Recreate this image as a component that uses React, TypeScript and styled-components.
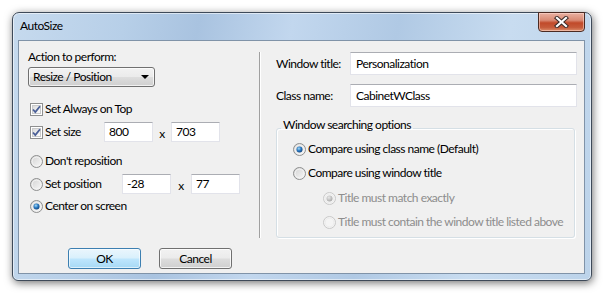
import React from "react";
import styled, { createGlobalStyle } from "styled-components";

const GlobalStyle = createGlobalStyle`
  html, body {
    margin: 0;
    padding: 0;
    background: #ffffff;
  }
  body {
    font-family: Lato, "Noto Sans", sans-serif;
    font-size: 12px;
    letter-spacing: -0.5px;
  }
`;

const CheckBox = ({ checked }: { checked?: boolean }) => (
  <svg width="13" height="13" viewBox="0 0 13 13">
    <defs>
      <linearGradient id="cbfill" x1="0" y1="0" x2="1" y2="1">
        <stop offset="0" stopColor="#d8d8d8" />
        <stop offset="1" stopColor="#ffffff" />
      </linearGradient>
    </defs>
    <rect x="0.5" y="0.5" width="12" height="12" fill="#fff" stroke="#8e8f8f" />
    <rect x="2.5" y="2.5" width="8" height="8" fill="url(#cbfill)" stroke="#c9cacb" />
    {checked && (
      <path d="M3 6.5 L5.3 9 L10 3.2" fill="none" stroke="#4a5f97" strokeWidth="1.8" />
    )}
  </svg>
);

const Radio = ({ checked, disabled }: { checked?: boolean; disabled?: boolean }) => (
  <svg width="13" height="13" viewBox="0 0 13 13">
    <defs>
      <radialGradient id="rdot" cx="0.4" cy="0.35" r="0.7">
        <stop offset="0" stopColor="#a9dcf6" />
        <stop offset="0.5" stopColor="#2b7bc4" />
        <stop offset="1" stopColor="#0d3f78" />
      </radialGradient>
      <radialGradient id="rdotoff" cx="0.4" cy="0.35" r="0.7">
        <stop offset="0" stopColor="#e8e8e8" />
        <stop offset="1" stopColor="#a6a6a6" />
      </radialGradient>
      <linearGradient id="rfill" x1="0" y1="0" x2="1" y2="1">
        <stop offset="0" stopColor="#d0d0d0" />
        <stop offset="1" stopColor="#fbfbfb" />
      </linearGradient>
    </defs>
    <circle cx="6.5" cy="6.5" r="6" fill={disabled ? "#f4f4f4" : "url(#rfill)"} stroke={disabled ? "#c8c8c8" : "#8e8f8f"} />
    <circle cx="6.5" cy="6.5" r="4.4" fill="none" stroke={disabled ? "#ececec" : "#f4f4f4"} />
    {checked && <circle cx="6.5" cy="6.5" r="3" fill={disabled ? "url(#rdotoff)" : "url(#rdot)"} />}
  </svg>
);

const App = () => {
  return (
    <>
      <GlobalStyle />
      <Page>
        <Window>
          <TitleBar>
            <Title>AutoSize</Title>
            <CloseButton>
              <svg width="15" height="12" viewBox="0 0 15 12">
                <path d="M3 2 L12 10 M12 2 L3 10" stroke="#3a2b28" strokeWidth="4.2" strokeLinecap="square" />
                <path d="M3 2 L12 10 M12 2 L3 10" stroke="#ffffff" strokeWidth="2.2" strokeLinecap="square" />
              </svg>
            </CloseButton>
          </TitleBar>
          <Client>
            <Main>
              <LeftCol>
                <Label>Action to perform:</Label>
                <Dropdown>
                  <span>Resize / Position</span>
                  <Arrow />
                </Dropdown>
                <OptionRow $top={12}>
                  <CheckBox checked />
                  <OptionText>Set Always on Top</OptionText>
                </OptionRow>
                <OptionRow $top={3}>
                  <CheckBox checked />
                  <OptionText $width={59}>Set size</OptionText>
                  <NumberBox>800</NumberBox>
                  <Times>x</Times>
                  <NumberBox>703</NumberBox>
                </OptionRow>
                <OptionRow $top={9}>
                  <Radio />
                  <OptionText>Don't reposition</OptionText>
                </OptionRow>
                <OptionRow $top={3}>
                  <Radio />
                  <OptionText $width={77}>Set position</OptionText>
                  <NumberBox>-28</NumberBox>
                  <Times $gap={20}>x</Times>
                  <NumberBox>77</NumberBox>
                </OptionRow>
                <OptionRow $top={2}>
                  <Radio checked />
                  <OptionText>Center on screen</OptionText>
                </OptionRow>
              </LeftCol>
              <Separator />
              <RightCol>
                <FieldRow>
                  <FieldLabel>Window title:</FieldLabel>
                  <TextBox>Personalization</TextBox>
                </FieldRow>
                <FieldRow $top={9}>
                  <FieldLabel>Class name:</FieldLabel>
                  <TextBox>CabinetWClass</TextBox>
                </FieldRow>
                <GroupBox>
                  <Legend>Window searching options</Legend>
                  <GroupRow $top={1}>
                    <Radio checked />
                    <OptionText>Compare using class name (Default)</OptionText>
                  </GroupRow>
                  <GroupRow $top={4}>
                    <Radio />
                    <OptionText>Compare using window title</OptionText>
                  </GroupRow>
                  <GroupRow $top={5} $indent={30}>
                    <Radio checked disabled />
                    <OptionText $disabled>Title must match exactly</OptionText>
                  </GroupRow>
                  <GroupRow $top={4} $indent={30}>
                    <Radio disabled />
                    <OptionText $disabled>Title must contain the window title listed above</OptionText>
                  </GroupRow>
                </GroupBox>
              </RightCol>
            </Main>
            <Footer>
              <PushButton $default>OK</PushButton>
              <PushButton>Cancel</PushButton>
            </Footer>
          </Client>
        </Window>
      </Page>
    </>
  );
};

const Page = styled.div`
  width: 604px;
  height: 293px;
  padding: 12px 0 0 12px;
  box-sizing: border-box;
`;

const Window = styled.div`
  width: 580px;
  height: 269px;
  box-sizing: border-box;
  border: 1px solid #3e4a59;
  border-radius: 7px 7px 6px 6px;
  background: linear-gradient(
    100deg,
    #c6daee 0%,
    #b7cfe8 18%,
    #a9c3e0 30%,
    #c2d7ee 45%,
    #b0c9e4 62%,
    #c8dcf0 80%,
    #bcd3ea 100%
  );
  box-shadow: 1px 2px 9px rgba(0, 0, 0, 0.55), inset 0 0 0 1px rgba(255, 255, 255, 0.55);
  display: flex;
  flex-direction: column;
`;

const TitleBar = styled.div`
  height: 27px;
  display: flex;
  align-items: flex-start;
  padding-left: 7px;
`;

const Title = styled.div`
  margin-top: 6px;
  line-height: 14px;
  color: #000;
  font-size: 12px;
`;

const CloseButton = styled.div`
  margin: -1px 6px 0 auto;
  width: 47px;
  height: 20px;
  box-sizing: border-box;
  border: 1px solid #4b2a22;
  border-radius: 0 0 4px 4px;
  background: linear-gradient(
    180deg,
    #e9b1a2 0%,
    #d98a74 40%,
    #c14a2a 55%,
    #c55b3b 80%,
    #dd8f6c 100%
  );
  box-shadow: inset 0 0 0 1px rgba(255, 220, 210, 0.55);
  display: flex;
  align-items: center;
  justify-content: center;
`;

const Client = styled.div`
  margin: 0 6px 0 5px;
  height: 234px;
  box-sizing: border-box;
  border: 1px solid #8093a8;
  background: #f0f0f0;
  padding: 9px 0 0 9px;
  display: flex;
  flex-direction: column;
`;

const Main = styled.div`
  display: flex;
  height: 188px;
`;

const LeftCol = styled.div`
  width: 231px;
  display: flex;
  flex-direction: column;
`;

const Label = styled.div`
  line-height: 14px;
  height: 14px;
  color: #000;
`;

const Dropdown = styled.div`
  margin-top: 3px;
  width: 127px;
  height: 20px;
  box-sizing: border-box;
  border: 1px solid #707070;
  border-radius: 3px;
  background: linear-gradient(180deg, #f2f2f2 0%, #ebebeb 48%, #dddddd 52%, #cfcfcf 100%);
  box-shadow: inset 0 0 0 1px rgba(255, 255, 255, 0.7);
  display: flex;
  align-items: center;
  justify-content: space-between;
  padding: 0 5px 0 4px;
  line-height: 14px;
`;

const Arrow = styled.span`
  width: 0;
  height: 0;
  border-left: 4px solid transparent;
  border-right: 4px solid transparent;
  border-top: 4px solid #000;
`;

const OptionRow = styled.div<{ $top?: number }>`
  margin-top: ${(p) => p.$top ?? 0}px;
  height: 20px;
  display: flex;
  align-items: center;
  padding-left: 2px;
  & > svg {
    flex: none;
  }
`;

const OptionText = styled.span<{ $width?: number; $disabled?: boolean }>`
  margin-left: 2px;
  line-height: 14px;
  white-space: nowrap;
  color: ${(p) => (p.$disabled ? "#8d8d8d" : "#000")};
  ${(p) => (p.$width ? `width: ${p.$width}px; flex: none;` : "")}
`;

const NumberBox = styled.div`
  width: 49px;
  height: 20px;
  box-sizing: border-box;
  background: #fff;
  border: 1px solid #e2e3ea;
  border-top-color: #abadb3;
  padding: 0 4px;
  line-height: 18px;
  color: #000;
`;

const Times = styled.span<{ $gap?: number }>`
  width: ${(p) => p.$gap ?? 18}px;
  text-align: center;
  padding-top: 4px;
  line-height: 14px;
  color: #000;
`;

const Separator = styled.div`
  margin-top: 2px;
  width: 0;
  height: 186px;
  border-left: 1px solid #a0a0a0;
  border-right: 1px solid #ffffff;
`;

const RightCol = styled.div`
  margin-left: 15px;
  width: 301px;
  display: flex;
  flex-direction: column;
`;

const FieldRow = styled.div<{ $top?: number }>`
  margin-top: ${(p) => p.$top ?? 2}px;
  display: flex;
  align-items: center;
  height: 23px;
`;

const FieldLabel = styled.span`
  width: 74px;
  flex: none;
  line-height: 14px;
  color: #000;
`;

const TextBox = styled.div`
  flex: 1;
  height: 23px;
  box-sizing: border-box;
  background: #fff;
  border: 1px solid #e2e3ea;
  border-top-color: #abadb3;
  padding: 0 5px;
  line-height: 21px;
  color: #000;
`;

const GroupBox = styled.fieldset`
  margin: 11px 2px 0 0;
  padding: 0 0 5px 16px;
  border: 1px solid #d5dfe5;
  border-radius: 3px;
  box-shadow: inset 1px 1px 0 #ffffff, 1px 1px 0 #ffffff;
  min-width: 0;
`;

const Legend = styled.legend`
  margin-left: -12px;
  padding: 0 2px 6px;
  line-height: 14px;
  color: #000;
`;

const GroupRow = styled.div<{ $top?: number; $indent?: number }>`
  margin-top: ${(p) => p.$top ?? 0}px;
  margin-left: ${(p) => p.$indent ?? 0}px;
  height: 20px;
  display: flex;
  align-items: center;
  & > svg {
    flex: none;
  }
`;

const Footer = styled.div`
  margin-top: 10px;
  padding-left: 40px;
  display: flex;
  gap: 18px;
`;

const PushButton = styled.div<{ $default?: boolean }>`
  width: 73px;
  height: 21px;
  box-sizing: border-box;
  border: 1px solid ${(p) => (p.$default ? "#3c7fb1" : "#707070")};
  border-radius: 3px;
  background: ${(p) =>
    p.$default
      ? "linear-gradient(180deg, #eaf6fd 0%, #d9f0fc 48%, #bee6fd 52%, #a7d9f5 100%)"
      : "linear-gradient(180deg, #f2f2f2 0%, #ebebeb 48%, #dddddd 52%, #cfcfcf 100%)"};
  box-shadow: inset 0 0 0 1px ${(p) => (p.$default ? "rgba(255,255,255,0.6)" : "rgba(255,255,255,0.75)")};
  display: flex;
  align-items: center;
  justify-content: center;
  line-height: 14px;
  color: #000;
`;

export default App;
